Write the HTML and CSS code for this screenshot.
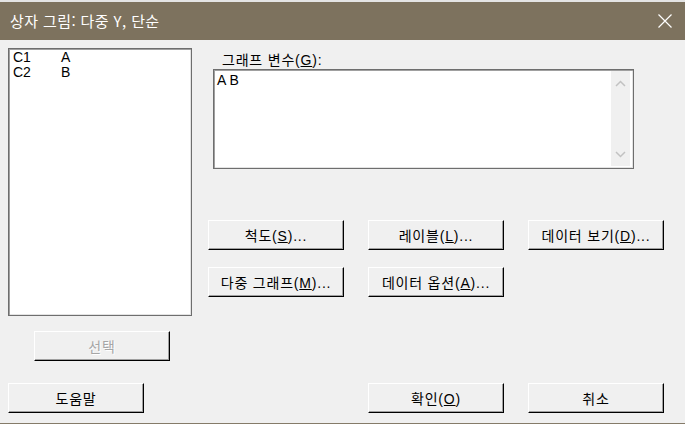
FILE: index.html
```html
<!DOCTYPE html>
<html lang="ko">
<head>
<meta charset="utf-8">
<title>상자 그림</title>
<link rel="stylesheet" href="styles.css">
</head>
<body>
<div class="window">
  <div class="titlebar">
    <span class="title">상자 그림: 다중 Y, 단순</span>
    <svg class="close" width="14" height="14" viewBox="0 0 14 14"><path d="M0.5 0.5 L13.5 13.5 M13.5 0.5 L0.5 13.5" stroke="#ffffff" stroke-width="1.2" fill="none"/></svg>
  </div>
  <div class="content">
    <div class="main">
      <div class="left">
        <div class="listbox">
          <div class="row"><span class="col">C1</span><span>A</span></div>
          <div class="row"><span class="col">C2</span><span>B</span></div>
        </div>
        <button class="btn select" disabled>선택</button>
      </div>
      <div class="right">
        <div class="label">그래프 변수(<u>G</u>):</div>
        <div class="textbox">
          <div class="textval">A B</div>
          <div class="scroll">
            <svg width="11" height="7" viewBox="0 0 11 7"><path d="M1 6 L5.5 1.5 L10 6" stroke="#c2c2c2" stroke-width="1.5" fill="none"/></svg>
            <svg width="11" height="7" viewBox="0 0 11 7"><path d="M1 1 L5.5 5.5 L10 1" stroke="#c2c2c2" stroke-width="1.5" fill="none"/></svg>
          </div>
        </div>
        <div class="btn-grid">
          <button class="btn">척도(<u>S</u>)...</button>
          <button class="btn">레이블(<u>L</u>)...</button>
          <button class="btn">데이터 보기(<u>D</u>)...</button>
          <button class="btn">다중 그래프(<u>M</u>)...</button>
          <button class="btn">데이터 옵션(<u>A</u>)...</button>
        </div>
      </div>
    </div>
    <div class="footer">
      <button class="btn help">도움말</button>
      <button class="btn">확인(<u>O</u>)</button>
      <button class="btn">취소</button>
    </div>
  </div>
</div>
</body>
</html>
```

FILE: styles.css
```css
html, body {
  margin: 0;
  padding: 0;
  background: #f0f0f0;
}

.window {
  width: 685px;
  height: 424px;
  box-sizing: border-box;
  background: #f0f0f0;
  border-top: 2px solid #e4e4e4;
  border-bottom: 1px solid #857b69;
  font-family: "Liberation Sans", "Noto Sans CJK KR", sans-serif;
  font-size: 14px;
  letter-spacing: 0.8px;
  color: #000;
  overflow: hidden;
}

.titlebar {
  height: 38px;
  background: #7d725e;
  display: flex;
  align-items: center;
  justify-content: space-between;
  padding: 0 13px 0 10px;
}

.title {
  font-family: "Noto Sans CJK KR", sans-serif;
  font-size: 15px;
  letter-spacing: 0.4px;
  color: #ffffff;
  line-height: 18px;
}

.main {
  display: grid;
  grid-template-columns: 184px 1fr;
  column-gap: 16px;
  padding-left: 8px;
}

.left {
  padding-top: 8px;
  display: flex;
  flex-direction: column;
}

.listbox {
  height: 268px;
  box-sizing: border-box;
  background: #fff;
  border: 1px solid #6e6e6e;
  box-shadow: inset 1px 1px 0 #a0a0a0, inset -1px -1px 0 #e3e3e3;
  padding: 1px 4px;
  line-height: 15px;
  letter-spacing: 0;
}

.row {
  display: flex;
}

.col {
  width: 48px;
}

.btn {
  width: 136px;
  height: 30px;
  box-sizing: border-box;
  background: #f0f0f0;
  border: 1px solid;
  border-color: #ffffff #000000 #000000 #ffffff;
  box-shadow: inset -1px -1px 0 #a0a0a0;
  font-family: "Liberation Sans", "Noto Sans CJK KR", sans-serif;
  font-size: 14px;
  letter-spacing: 0.8px;
  color: #000;
  padding: 0;
  margin: 0;
  text-align: center;
}

.select {
  margin-top: 15px;
  margin-left: 26px;
  color: #a6a6a6;
  text-shadow: 1px 1px 0 #ffffff;
}

.right {
  padding-top: 13px;
}

.label {
  margin-left: 14px;
  line-height: 14px;
  margin-bottom: 2px;
}

.textbox {
  margin-left: 5px;
  width: 421px;
  height: 100px;
  box-sizing: border-box;
  background: #fff;
  border: 1px solid #6e6e6e;
  box-shadow: inset 1px 1px 0 #a0a0a0, inset -1px -1px 0 #e3e3e3;
  padding: 1px;
  display: flex;
}

.textval {
  flex: 1;
  padding: 2px 2px 0 2px;
  line-height: 14px;
  letter-spacing: 0;
}

.scroll {
  width: 19px;
  background: #f0f0f0;
  margin-right: 2px;
  margin-bottom: 1px;
  display: flex;
  flex-direction: column;
  justify-content: space-between;
  align-items: center;
  padding: 9px 0 8px 0;
}

.scroll svg {
  display: block;
}

.btn-grid {
  margin-top: 51px;
  display: grid;
  grid-template-columns: 136px 136px 136px;
  column-gap: 24px;
  row-gap: 17px;
}

.footer {
  display: flex;
  gap: 24px;
  padding-left: 8px;
  margin-top: 22px;
}

.help {
  margin-right: 200px;
}
```
